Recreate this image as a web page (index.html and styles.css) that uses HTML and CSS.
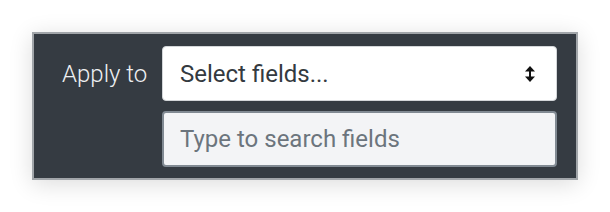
FILE: index.html
```html
<!DOCTYPE html>
<html lang="en">
<head>
    <meta charset="UTF-8">
    <title>Apply to</title>
    <link rel="stylesheet" href="styles.css">
</head>
<body>
    <div class="panel">
        <label class="panel-label" for="fields">Apply to</label>
        <div class="panel-fields">
            <div class="select-box" id="fields">
                <span>Select fields...</span>
                <svg class="select-arrow" width="10" height="16" viewBox="0 0 10 16">
                    <path d="M5 0 L10 5.5 H0 Z" fill="#111"/>
                    <path d="M5 16 L10 10.5 H0 Z" fill="#111"/>
                    <rect x="4" y="4" width="2" height="8" fill="#111"/>
                </svg>
            </div>
            <input class="search-box" type="text" placeholder="Type to search fields">
        </div>
    </div>
</body>
</html>
```

FILE: styles.css
```css
body {
    margin: 0;
    padding: 32px;
    background: #fff;
    font-family: Roboto, "Noto Sans", sans-serif;
}

.panel {
    box-sizing: border-box;
    width: 546px;
    height: 148px;
    background-color: #353b42;
    border: 2px solid #a1a5a9;
    box-shadow: 0 4px 22px rgba(0, 0, 0, 0.14);
    display: flex;
    padding: 12px 19px 11px 28px;
    gap: 15px;
}

.panel-label {
    color: #eef0f2;
    font-size: 24px;
    font-weight: 300;
    padding-top: 14px;
    width: 85px;
    white-space: nowrap;
}

.panel-fields {
    display: flex;
    flex-direction: column;
    gap: 10px;
    flex: 1;
}

.select-box {
    height: 55px;
    box-sizing: border-box;
    background: #fff;
    border: 1px solid #d3d6d9;
    border-radius: 4px;
    display: flex;
    align-items: center;
    justify-content: space-between;
    padding: 0 21px 0 17px;
    font-size: 24px;
    color: #343a40;
}

.select-arrow {
    display: block;
}

.search-box {
    height: 56px;
    box-sizing: border-box;
    background: #f3f4f6;
    border: 2px solid #818a93;
    border-radius: 4px;
    padding: 0 16px;
    font-family: inherit;
    font-size: 24px;
    color: #343a40;
    outline: none;
}

.search-box::placeholder {
    color: #6c757d;
}
```
